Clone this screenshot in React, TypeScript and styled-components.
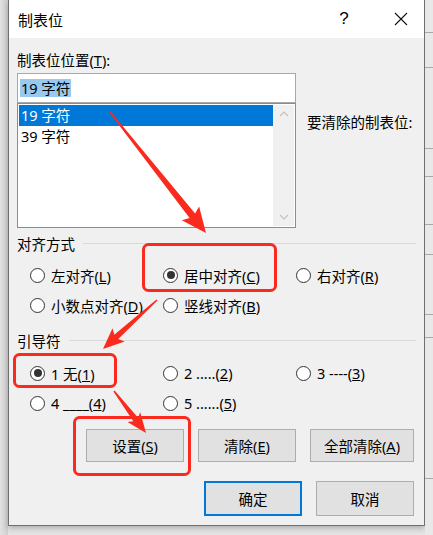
import styled, { createGlobalStyle } from "styled-components";

const GlobalStyle = createGlobalStyle`
  html, body {
    margin: 0;
    padding: 0;
    background: #dcdcdc;
  }
  body {
    font-family: "Noto Sans", "Noto Sans CJK SC", sans-serif;
    font-size: 14.5px;
    color: #000;
  }
`;

const Page = styled.div`
  position: relative;
  width: 433px;
  height: 535px;
  overflow: hidden;
  display: flex;
  background: #e4e4e4;
`;

const LeftEdge = styled.div`
  width: 8px;
  background: linear-gradient(to right, #e2e2e2, #cfcfcf);
`;

const RightEdge = styled.div`
  width: 8px;
  display: flex;
  flex-direction: column;
  background: #e8e8e8;
`;

const EdgeCell = styled.div<{ $h: number }>`
  height: ${(p) => p.$h}px;
  border-bottom: 1px solid #a8a8a8;
`;

const Dialog = styled.div`
  width: 417px;
  height: 526px;
  box-sizing: border-box;
  border: 1px solid #6f6f6f;
  border-top: none;
  background: #f0f0f0;
  display: flex;
  flex-direction: column;
  box-shadow: 0 2px 6px rgba(0, 0, 0, 0.25);
`;

const TitleBar = styled.div`
  height: 38px;
  background: #fff;
  display: flex;
  align-items: center;
  padding-left: 9px;
`;

const Title = styled.div`
  font-size: 15px;
  flex: 1;
`;

const TitleButton = styled.div`
  width: 46px;
  height: 38px;
  display: flex;
  align-items: center;
  justify-content: center;
  font-family: "Liberation Sans", sans-serif;
  font-size: 17px;
`;

const Body = styled.div`
  flex: 1;
  padding: 0 8px 0 8px;
  display: flex;
  flex-direction: column;
`;

const TopGrid = styled.div`
  display: grid;
  grid-template-columns: 279px 1fr;
  column-gap: 11px;
`;

const Column = styled.div`
  display: flex;
  flex-direction: column;
`;

const Label = styled.div<{ $top?: number }>`
  height: 20px;
  line-height: 20px;
  margin-top: ${(p) => p.$top ?? 0}px;
  white-space: nowrap;
`;

const InputBox = styled.div`
  margin-top: 3px;
  height: 30px;
  box-sizing: border-box;
  border: 1px solid #a9a9a9;
  background: #fff;
  display: flex;
  align-items: center;
  padding-left: 2px;
`;

const Selected = styled.span`
  background: #99c9ef;
  line-height: 18px;
  padding: 0 1px;
`;

const ListBox = styled.div`
  height: 125px;
  box-sizing: border-box;
  border: 1px solid #8c8c8c;
  background: #fff;
  display: flex;
  padding: 1px;
`;

const Rows = styled.div`
  flex: 1;
  display: flex;
  flex-direction: column;
`;

const Row = styled.div<{ $sel?: boolean }>`
  height: 21px;
  line-height: 21px;
  padding-left: 2px;
  background: ${(p) => (p.$sel ? "#0078d7" : "transparent")};
  color: ${(p) => (p.$sel ? "#fff" : "#000")};
`;

const ScrollBar = styled.div`
  width: 21px;
  background: #f0f0f0;
  display: flex;
  flex-direction: column;
  justify-content: space-between;
  align-items: center;
  padding: 6px 0;
`;

const GroupHead = styled.div<{ $top: number }>`
  margin-top: ${(p) => p.$top}px;
  height: 20px;
  display: flex;
  align-items: center;
  gap: 8px;
  &::after {
    content: "";
    flex: 1;
    height: 1px;
    background: #dadada;
  }
`;

const RadioGrid = styled.div<{ $top: number }>`
  margin-top: ${(p) => p.$top}px;
  padding-left: 13px;
  display: grid;
  grid-template-columns: repeat(3, 133px);
  row-gap: 10px;
`;

const RadioItem = styled.div`
  height: 20px;
  display: flex;
  align-items: center;
  gap: 6px;
  white-space: nowrap;
`;

const Circle = styled.div<{ $on?: boolean }>`
  width: 15px;
  height: 15px;
  box-sizing: border-box;
  border-radius: 50%;
  border: 1px solid #333;
  background: #fff;
  display: flex;
  align-items: center;
  justify-content: center;
  &::after {
    content: "";
    width: 8px;
    height: 8px;
    border-radius: 50%;
    background: ${(p) => (p.$on ? "#333" : "transparent")};
  }
`;

const ButtonRow = styled.div<{ $top: number }>`
  margin-top: ${(p) => p.$top}px;
  padding-right: 2px;
  display: flex;
  justify-content: flex-end;
  gap: 14px;
`;

const Button = styled.div<{ $w?: number; $h: number; $primary?: boolean }>`
  width: ${(p) => p.$w ?? 98}px;
  height: ${(p) => p.$h}px;
  box-sizing: border-box;
  background: #e1e1e1;
  border: ${(p) => (p.$primary ? "2px solid #0078d7" : "1px solid #adadad")};
  display: flex;
  align-items: center;
  justify-content: center;
`;

const Overlay = styled.svg`
  position: absolute;
  left: 0;
  top: 0;
  pointer-events: none;
`;

const RED = "#fa2a1e";

function arrow(
  x1: number,
  y1: number,
  x2: number,
  y2: number,
  w0: number,
  w1: number,
  hl: number,
  hw: number
) {
  const len = Math.hypot(x2 - x1, y2 - y1);
  const dx = (x2 - x1) / len;
  const dy = (y2 - y1) / len;
  const nx = -dy;
  const ny = dx;
  const bx = x2 - dx * hl;
  const by = y2 - dy * hl;
  const wx = x2 - dx * (hl + 3);
  const wy = y2 - dy * (hl + 3);
  const pts = [
    [x1 + (nx * w0) / 2, y1 + (ny * w0) / 2],
    [bx + (nx * w1) / 2, by + (ny * w1) / 2],
    [wx + (nx * hw) / 2, wy + (ny * hw) / 2],
    [x2, y2],
    [wx - (nx * hw) / 2, wy - (ny * hw) / 2],
    [bx - (nx * w1) / 2, by - (ny * w1) / 2],
    [x1 - (nx * w0) / 2, y1 - (ny * w0) / 2],
  ];
  return pts.map((p) => p.map((v) => v.toFixed(1)).join(",")).join(" ");
}

const K = ({ c }: { c: string }) => <u>{c}</u>;

const alignOpts = [
  { t: "左对齐", k: "L" },
  { t: "居中对齐", k: "C", on: true },
  { t: "右对齐", k: "R" },
  { t: "小数点对齐", k: "D" },
  { t: "竖线对齐", k: "B" },
];

const leaderOpts = [
  { t: "1 无", k: "1", on: true },
  { t: "2 .....", k: "2" },
  { t: "3 ----", k: "3" },
  { t: "4 ____", k: "4" },
  { t: "5 ......", k: "5" },
];

const edgeCells = [32, 34, 80, 27, 47, 29, 59, 22, 140];

function App() {
  return (
    <>
      <GlobalStyle />
      <Page>
        <LeftEdge />
        <Dialog>
          <TitleBar>
            <Title>制表位</Title>
            <TitleButton>?</TitleButton>
            <TitleButton style={{ marginLeft: 11 }}>
              <svg width="14" height="14" viewBox="0 0 14 14">
                <path d="M1 1L13 13M13 1L1 13" stroke="#111" strokeWidth="1.1" />
              </svg>
            </TitleButton>
          </TitleBar>
          <Body>
            <TopGrid>
              <Column>
                <Label $top={12}>
                  制表位位置(<K c="T" />):
                </Label>
                <InputBox>
                  <Selected>19 字符</Selected>
                </InputBox>
                <ListBox>
                  <Rows>
                    <Row $sel>19 字符</Row>
                    <Row>39 字符</Row>
                  </Rows>
                  <ScrollBar>
                    <svg width="10" height="6" viewBox="0 0 10 6">
                      <path d="M1 5L5 1L9 5" stroke="#c2c2c2" strokeWidth="1.2" fill="none" />
                    </svg>
                    <svg width="10" height="6" viewBox="0 0 10 6">
                      <path d="M1 1L5 5L9 1" stroke="#c2c2c2" strokeWidth="1.2" fill="none" />
                    </svg>
                  </ScrollBar>
                </ListBox>
              </Column>
              <Column>
                <Label $top={74}>要清除的制表位:</Label>
              </Column>
            </TopGrid>

            <GroupHead $top={5}>对齐方式</GroupHead>
            <RadioGrid $top={12}>
              {alignOpts.map((o) => (
                <RadioItem key={o.k}>
                  <Circle $on={o.on} />
                  <span>
                    {o.t}(<K c={o.k} />)
                  </span>
                </RadioItem>
              ))}
            </RadioGrid>

            <GroupHead $top={15}>引导符</GroupHead>
            <RadioGrid $top={13}>
              {leaderOpts.map((o) => (
                <RadioItem key={o.k}>
                  <Circle $on={o.on} />
                  <span>
                    {o.t}(<K c={o.k} />)
                  </span>
                </RadioItem>
              ))}
            </RadioGrid>

            <ButtonRow $top={16}>
              <Button $h={33}>
                <span>
                  设置(<K c="S" />)
                </span>
              </Button>
              <Button $h={33}>
                <span>
                  清除(<K c="E" />)
                </span>
              </Button>
              <Button $h={33} $w={104}>
                <span>
                  全部清除(<K c="A" />)
                </span>
              </Button>
            </ButtonRow>
            <ButtonRow $top={19}>
              <Button $h={35} $primary>
                确定
              </Button>
              <Button $h={35}>取消</Button>
            </ButtonRow>
          </Body>
        </Dialog>
        <RightEdge>
          {edgeCells.map((h, i) => (
            <EdgeCell key={i} $h={h} />
          ))}
        </RightEdge>
        <Overlay width="433" height="535" viewBox="0 0 433 535">
          <g fill="none" stroke={RED} strokeWidth="3">
            <rect x="143.5" y="244.5" width="132" height="46" rx="5" />
            <rect x="14.5" y="354.5" width="101" height="32" rx="5" />
            <rect x="74.5" y="417.5" width="115" height="57" rx="5" />
          </g>
          <g fill={RED}>
            <polygon points={arrow(110, 112, 206, 233, 1.5, 7, 22, 22)} />
            <polygon points={arrow(157, 300, 103, 349, 1.5, 6, 18, 18)} />
            <polygon points={arrow(114, 391, 146, 433, 1.5, 6, 17, 16)} />
          </g>
        </Overlay>
      </Page>
    </>
  );
}

export default App;
